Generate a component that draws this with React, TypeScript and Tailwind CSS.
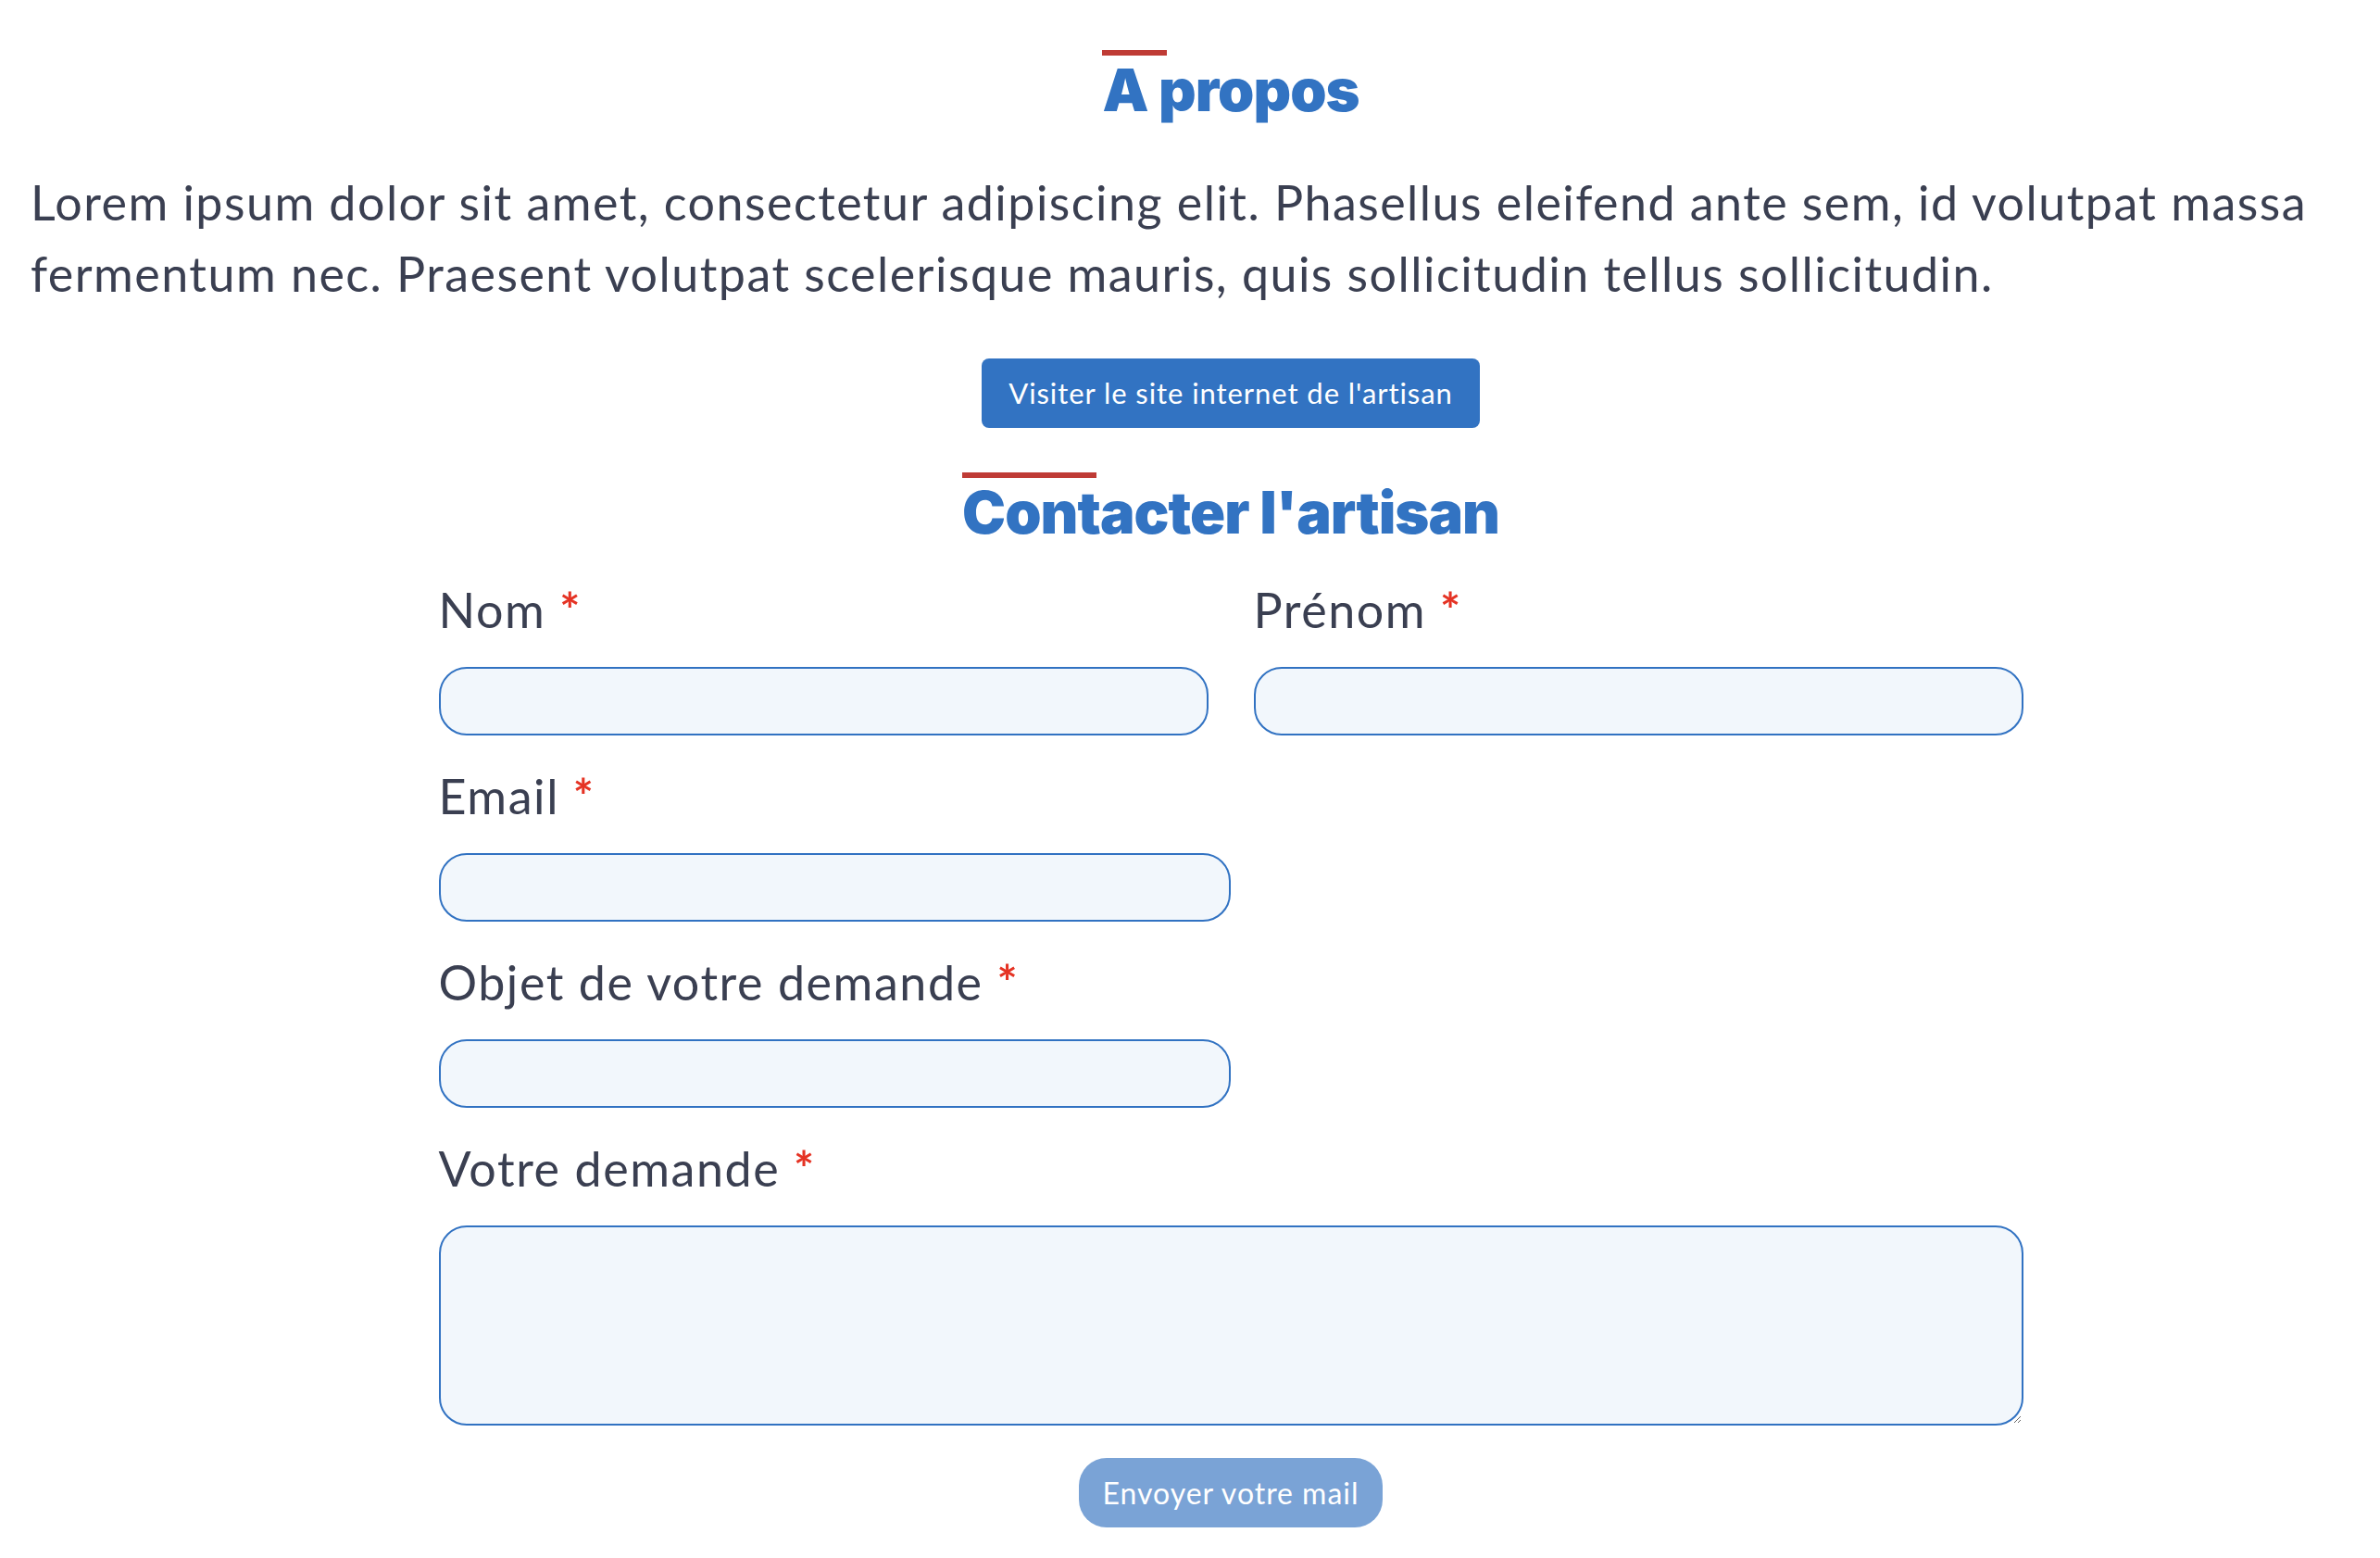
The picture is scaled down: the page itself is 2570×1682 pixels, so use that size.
import React from "react";

const body = { fontFamily: "Lato, 'Noto Sans', sans-serif" };
const head = { fontFamily: "Inter, 'Liberation Sans', sans-serif" };

function Title({ text }: { text: string }) {
    return (
        <div className="flex justify-center">
            <div className="flex flex-col">
                <div className="w-1/4 h-[6px] bg-[#bf3b35]" />
                <h2 style={head} className="mt-[5px] text-[63px] leading-[64px] font-black text-[#3273c2] tracking-[-1px]">
                    {text}
                </h2>
            </div>
        </div>
    )
}

function Field({ label, wide, area }: { label: string, wide?: boolean, area?: boolean }) {
    return (
        <div className={wide ? "w-full" : "w-1/2"}>
            <label className="block text-[52px] leading-[77px] tracking-[0.03em] text-[#3a3f51]">
                {label} <span className="font-bold text-[#e53324]">*</span>
            </label>
            {area ? (
                <textarea className="mt-[23px] block w-full h-[216px] rounded-[30px] border-2 border-[#3172c2] bg-[#f2f7fc]" />
            ) : (
                <input className="mt-[23px] block w-full h-[74px] rounded-[30px] border-2 border-[#3172c2] bg-[#f2f7fc]" />
            )}
        </div>
    )
}

export default function App() {
    return (
        <div style={body} className="w-full min-h-screen bg-white">
            <div className="pl-[88px] pt-[54px]">
                <Title text="A propos" />
            </div>
            <p className="mt-[51px] px-[33px] text-[52px] leading-[77px] tracking-[0.028em] text-[#3a3f51]">
                Lorem ipsum dolor sit amet, consectetur adipiscing elit. Phasellus eleifend ante sem, id volutpat massa fermentum nec. Praesent volutpat scelerisque mauris, quis sollicitudin tellus sollicitudin.
            </p>
            <div className="pl-[88px]">
                <div className="flex justify-center mt-[53px]">
                    <button className="h-[75px] w-[538px] rounded-[8px] bg-[#3273c2] text-white text-[31px] tracking-[0.03em]">
                        Visiter le site internet de l'artisan
                    </button>
                </div>
                <div className="mt-[48px]">
                    <Title text="Contacter l'artisan" />
                </div>
                <form className="w-[1711px] mx-auto mt-[35px] flex flex-col gap-[27px]">
                    <div className="flex gap-[49px]">
                        <div className="flex-1"><Field label="Nom" wide /></div>
                        <div className="flex-1"><Field label="Prénom" wide /></div>
                    </div>
                    <Field label="Email" />
                    <Field label="Objet de votre demande" />
                    <Field label="Votre demande" wide area />
                    <div className="flex justify-center mt-[8px]">
                        <button type="button" className="h-[75px] w-[328px] rounded-[30px] bg-[#7aa3d6] text-white text-[32px] tracking-[0.03em]">
                            Envoyer votre mail
                        </button>
                    </div>
                </form>
            </div>
        </div>
    )
}
